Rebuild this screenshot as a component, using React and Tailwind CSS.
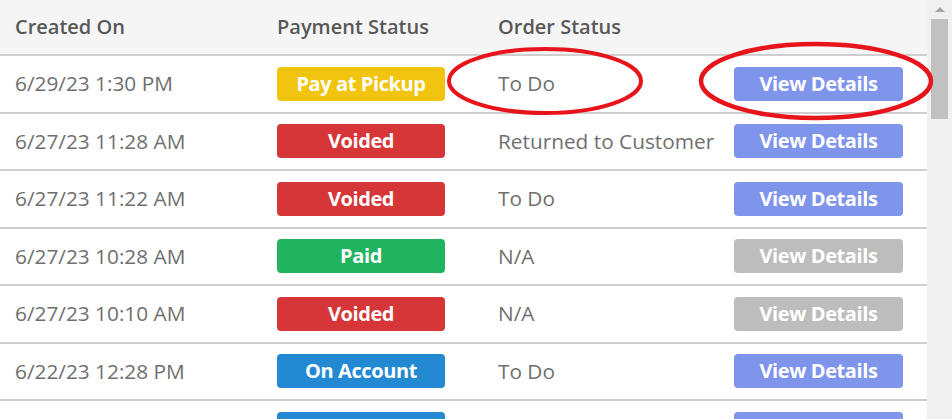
import React from 'react';

const orders = [
  { created: '6/29/23 1:30 PM', payment: 'Pay at Pickup', status: 'To Do', active: true },
  { created: '6/27/23 11:28 AM', payment: 'Voided', status: 'Returned to Customer', active: true },
  { created: '6/27/23 11:22 AM', payment: 'Voided', status: 'To Do', active: true },
  { created: '6/27/23 10:28 AM', payment: 'Paid', status: 'N/A', active: false },
  { created: '6/27/23 10:10 AM', payment: 'Voided', status: 'N/A', active: false },
  { created: '6/22/23 12:28 PM', payment: 'On Account', status: 'To Do', active: true },
  // next row only peeks in below the fold
  { created: '', payment: 'On Account', status: '', active: true, hidden: true },
];

const badgeColors = {
  'Pay at Pickup': 'bg-[#f1c40f]',
  Voided: 'bg-[#d63638]',
  Paid: 'bg-[#22b35e]',
  'On Account': 'bg-[#2389d3]',
};

const OrderRow = ({ order }) => (
  <div className="grid grid-cols-[277px_221px_236px_1fr] items-center h-[57.5px] shrink-0 border-b-2 border-[#cfcfcf] bg-white">
    <div className="pl-[15px] text-[#6f6f6f]">{order.created}</div>
    <div>
      <span className={`flex items-center justify-center w-[168px] h-[34px] rounded-[4px] text-white font-bold text-[20px] tracking-[-0.4px] ${badgeColors[order.payment]}`}>
        {!order.hidden && order.payment}
      </span>
    </div>
    <div className="text-[#6f6f6f] whitespace-nowrap">{order.status}</div>
    <div>
      <button
        className={`flex items-center justify-center w-[169px] h-[34px] rounded-[4px] text-white font-bold text-[20px] tracking-[-0.4px] ${
          order.active ? 'bg-[#7f94eb]' : 'bg-[#bdbdbd]'
        }`}
      >
        {!order.hidden && 'View Details'}
      </button>
    </div>
  </div>
);

const App = () => {
  return (
    <div className="relative w-[952px] h-[419px] overflow-hidden bg-white flex font-['Open_Sans',sans-serif] text-[20.8px] leading-none">
      {/* Orders table */}
      <div className="flex-1 flex flex-col">
        <div className="grid grid-cols-[277px_221px_236px_1fr] items-center h-[56px] shrink-0 bg-[#f5f5f5] border-b-2 border-[#cfcfcf] text-[#585858] text-[20px] font-semibold">
          <div className="pl-[15px]">Created On</div>
          <div>Payment Status</div>
          <div>Order Status</div>
          <div></div>
        </div>
        {orders.map((order, i) => (
          <OrderRow key={i} order={order} />
        ))}
      </div>

      {/* Scrollbar */}
      <div className="w-[25px] shrink-0 bg-[#f0f0f0] flex flex-col items-center">
        <div className="h-[19px] flex items-center justify-center">
          <div className="w-0 h-0 border-l-[5px] border-r-[5px] border-b-[5px] border-l-transparent border-r-transparent border-b-[#a3a3a3]" />
        </div>
        <div className="w-[17px] h-[100px] bg-[#c1c1c1]" />
      </div>

      {/* Red annotation circles */}
      <svg className="absolute inset-0 pointer-events-none" width="952" height="419">
        <ellipse cx="545" cy="81" rx="96" ry="32" fill="none" stroke="#e8141b" strokeWidth="4" />
        <ellipse cx="816" cy="81" rx="115" ry="37" fill="none" stroke="#e8141b" strokeWidth="4.5" />
      </svg>
    </div>
  );
};

export default App;
